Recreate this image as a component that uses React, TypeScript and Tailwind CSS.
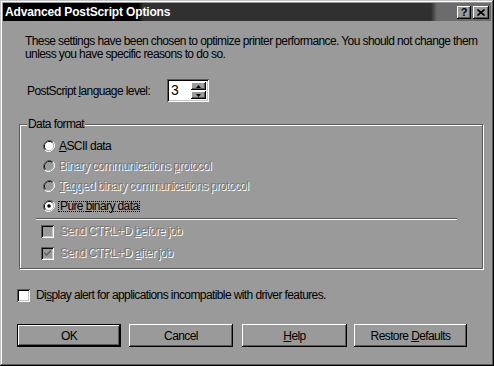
const raised =
  "shadow-[inset_-1px_-1px_#000,inset_1px_1px_#fff,inset_-2px_-2px_#5a5a5a]"
const sunken =
  "shadow-[inset_1px_1px_#5a5a5a,inset_-1px_-1px_#fff,inset_2px_2px_#000,inset_-2px_-2px_#c4c4c4]"
const disabledText = "text-[#777] [text-shadow:1px_1px_0_#fff]"

function Radio({ checked, disabled }: { checked?: boolean; disabled?: boolean }) {
  return (
    <svg width="12" height="12" viewBox="0 0 12 12" className="shrink-0">
      <path d="M10.2 1.8A6 6 0 0 0 1.8 10.2" fill="none" stroke="#5a5a5a" strokeWidth="1" />
      <path d="M1.8 10.2A6 6 0 0 0 10.2 1.8" fill="none" stroke="#fff" strokeWidth="1" />
      <path d="M9.5 2.5A5 5 0 0 0 2.5 9.5" fill="none" stroke="#000" strokeWidth="1" />
      <path d="M2.5 9.5A5 5 0 0 0 9.5 2.5" fill="none" stroke="#c4c4c4" strokeWidth="1" />
      <circle cx="6" cy="6" r="4" fill={disabled ? "#9a9a9a" : "#fff"} />
      {checked && <circle cx="6" cy="6" r="1.8" fill="#000" />}
    </svg>
  )
}

function Check({ checked, disabled }: { checked?: boolean; disabled?: boolean }) {
  return (
    <div
      className={`w-[13px] h-[13px] shrink-0 flex items-center justify-center ${sunken} ${
        disabled ? "bg-[#9a9a9a]" : "bg-white"
      }`}
    >
      {checked && (
        <svg width="7" height="7" viewBox="0 0 7 7">
          <path d="M0 2.5l2.5 2.5L7 0.5" fill="none" stroke={disabled ? "#666" : "#000"} strokeWidth="1.6" />
        </svg>
      )}
    </div>
  )
}

function Btn({ label, width, isDefault }: { label: React.ReactNode; width: string; isDefault?: boolean }) {
  return (
    <div className={`${width} h-[23px] ${isDefault ? "border border-black" : ""}`}>
      <div className={`w-full h-full flex items-center justify-center ${raised}`}>
        <span>{label}</span>
      </div>
    </div>
  )
}

export default function App() {
  return (
    <div
      className="w-[494px] h-[366px] bg-[#9a9a9a] p-[3px] flex flex-col text-black text-[12px] tracking-[-0.6px] font-['Liberation_Sans',Arial,sans-serif] shadow-[inset_-1px_-1px_#000,inset_1px_1px_#c4c4c4,inset_-2px_-2px_#5a5a5a,inset_2px_2px_#fff]"
    >
      {/* title bar */}
      <div className="h-[18px] flex items-center pl-[2px] pr-[2px] bg-[linear-gradient(to_right,#000_0,#000_135px,#303030_140px,#303030_428px,#6c6c6c_434px)]">
        <span className="flex-1 text-white font-bold tracking-[-0.15px]">Advanced PostScript Options</span>
        <div className={`w-[14px] h-[13px] flex items-center justify-center bg-[#9a9a9a] ${raised} mr-[2px]`}>
          <span className="font-bold text-[11px] leading-none tracking-normal">?</span>
        </div>
        <div className={`w-[16px] h-[13px] flex items-center justify-center bg-[#9a9a9a] ${raised}`}>
          <svg width="8" height="7" viewBox="0 0 8 7">
            <path d="M0.5 0.5l7 6M7.5 0.5l-7 6" stroke="#000" strokeWidth="1.6" />
          </svg>
        </div>
      </div>

      {/* body */}
      <div className="flex flex-col pl-[14px] pt-[14px]">
        <p className="ml-[8px] leading-[13px]">
          These settings have been chosen to optimize printer performance. You should not change them
          <br />
          unless you have specific reasons to do so.
        </p>

        <div className="mt-[18px] flex items-center h-[23px]">
          <span className="ml-[10px] w-[140px]">
            PostScript <u>l</u>anguage level:
          </span>
          <div className={`w-[42px] h-[23px] bg-white ${sunken} flex items-center pl-[4px] pr-[3px]`}>
            <span className="flex-1 text-[14px]">3</span>
            <div className="flex flex-col gap-[1px]">
              <div className={`w-[15px] h-[8px] bg-[#9a9a9a] ${raised} flex items-center justify-center`}>
                <svg width="5" height="3" viewBox="0 0 5 3"><path d="M2.5 0L5 3H0z" fill="#000" /></svg>
              </div>
              <div className={`w-[15px] h-[8px] bg-[#9a9a9a] ${raised} flex items-center justify-center`}>
                <svg width="5" height="3" viewBox="0 0 5 3"><path d="M0 0h5L2.5 3z" fill="#000" /></svg>
              </div>
            </div>
          </div>
        </div>

        {/* group */}
        <div className="relative mt-[22px] ml-[2px] w-[464px] h-[145px] border border-[#5a5a5a] shadow-[inset_1px_1px_0_#fff,1px_1px_0_#fff] pt-[11px]">
          <span className="absolute -top-[8px] left-[7px] px-[1px] bg-[#9a9a9a] leading-[14px]">Data format</span>
          <div className="h-[20px] flex items-center gap-[4px] ml-[23px]">
            <Radio />
            <span>
              <u>A</u>SCII data
            </span>
          </div>
          <div className="h-[20px] flex items-center gap-[4px] ml-[23px]">
            <Radio disabled />
            <span className={disabledText}>
              Binary communications <u>p</u>rotocol
            </span>
          </div>
          <div className="h-[20px] flex items-center gap-[4px] ml-[23px]">
            <Radio disabled />
            <span className={disabledText}>
              <u>T</u>agged binary communications protocol
            </span>
          </div>
          <div className="h-[20px] flex items-center gap-[3px] ml-[23px]">
            <Radio checked />
            <span className="border border-dotted border-black px-[1px] leading-[9px]">
              Pure <u>b</u>inary data
            </span>
          </div>
          <div className="mt-[2px] ml-[16px] w-[421px] h-[2px] border-t border-[#5a5a5a] border-b border-b-white" />
          <div className="h-[22px] flex items-center gap-[6px] ml-[21px]">
            <Check disabled />
            <span className={disabledText}>
              Send CTRL+D <u>b</u>efore job
            </span>
          </div>
          <div className="h-[22px] flex items-center gap-[6px] ml-[21px]">
            <Check checked disabled />
            <span className={disabledText}>
              Send CTRL+D <u>a</u>fter job
            </span>
          </div>
        </div>

        <div className="mt-[16px] h-[20px] flex items-center gap-[6px]">
          <Check />
          <span>
            Di<u>s</u>play alert for applications incompatible with driver features.
          </span>
        </div>

        <div className="mt-[19px] flex">
          <Btn label="OK" width="w-[104px]" isDefault />
          <div className="ml-[8px]">
            <Btn label="Cancel" width="w-[104px]" />
          </div>
          <div className="ml-[9px]">
            <Btn label={<><u>H</u>elp</>} width="w-[105px]" />
          </div>
          <div className="ml-[7px]">
            <Btn label={<>Restore <u>D</u>efaults</>} width="w-[113px]" />
          </div>
        </div>
      </div>
    </div>
  )
}
